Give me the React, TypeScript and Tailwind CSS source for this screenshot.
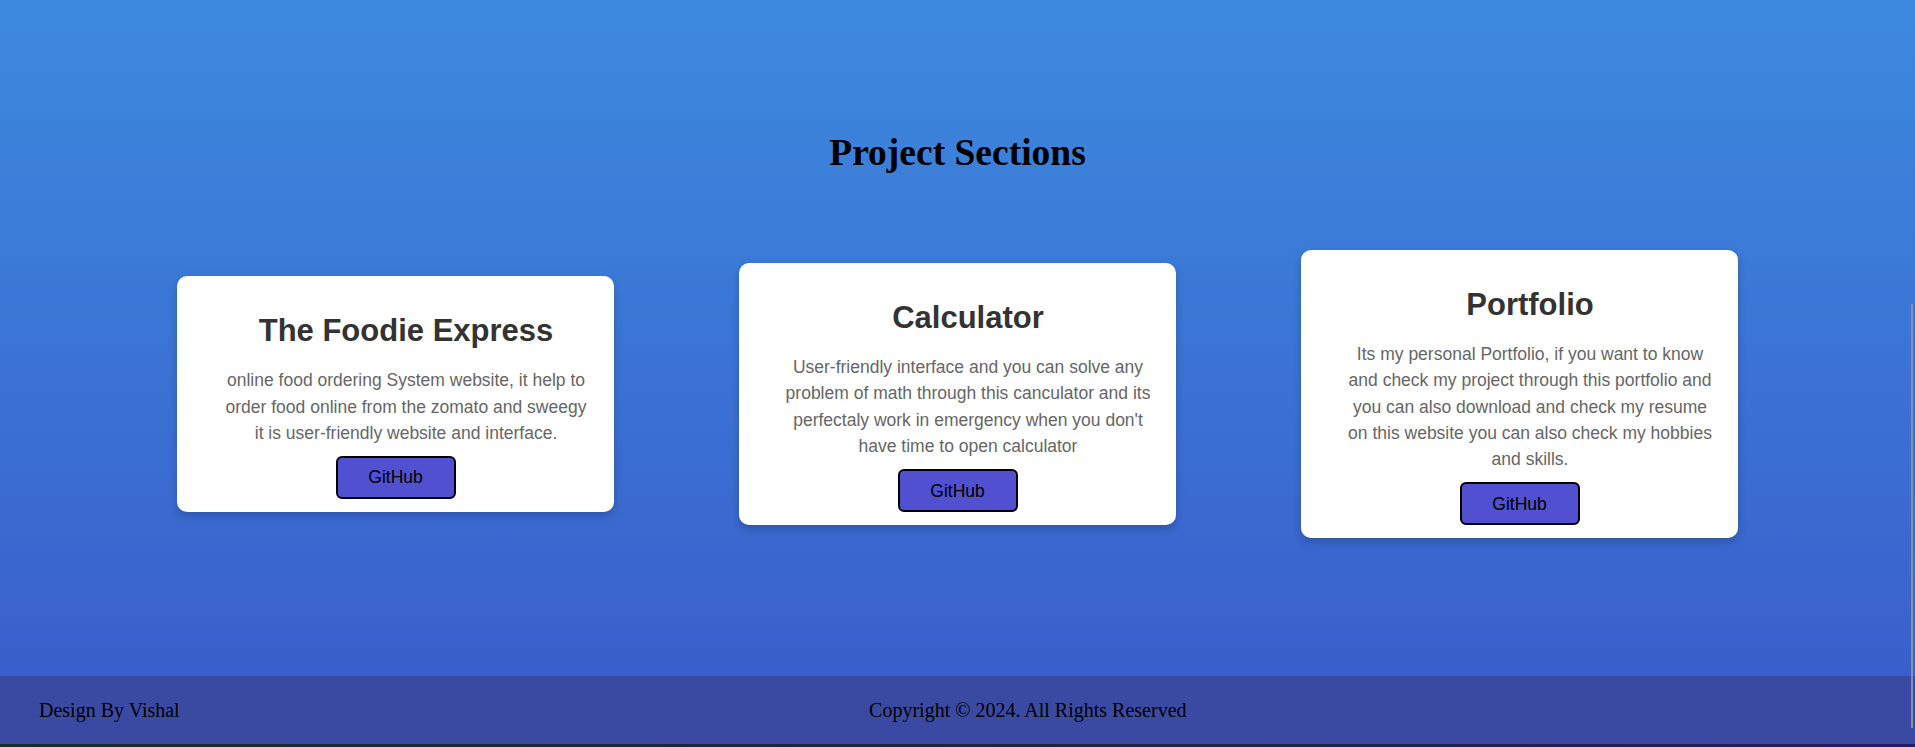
import React from 'react';

const projects = [
  {
    title: 'The Foodie Express',
    text: 'online food ordering System website, it help to order food online from the zomato and sweegy it is user-friendly website and interface.',
  },
  {
    title: 'Calculator',
    text: "User-friendly interface and you can solve any problem of math through this canculator and its perfectaly work in emergency when you don't have time to open calculator",
  },
  {
    title: 'Portfolio',
    text: 'Its my personal Portfolio, if you want to know and check my project through this portfolio and you can also download and check my resume on this website you can also check my hobbies and skills.',
  },
];

function ProjectCard({ title, text }: { title: string; text: string }) {
  return (
    <div className="w-[437px] rounded-[10px] bg-white px-[20px] pt-[37px] pb-[13px] shadow-[0_4px_10px_rgba(0,0,0,0.2)] flex flex-col items-center font-['Liberation_Sans',Arial,sans-serif]">
      <div className="w-full pl-[23px] pr-[2px] text-center">
        <h2 className="text-[31px] leading-[36px] font-bold text-[#333]">{title}</h2>
        <p className="mt-[18px] text-[17.5px] leading-[26.25px] text-[#666]">{text}</p>
      </div>
      <button className="mt-[10px] h-[43px] w-[120px] rounded-[6px] border-2 border-black bg-[#5050d0] text-[17.5px] text-black">
        GitHub
      </button>
    </div>
  );
}

export default function App() {
  return (
    <div className="relative min-h-screen flex flex-col">
      <main className="flex-1 bg-gradient-to-b from-[#3c8ade] to-[#3a5fcc] pt-[131px]">
        <h1 className="text-center text-[37.5px] leading-[43px] font-bold text-black font-['Liberation_Serif','Times_New_Roman',serif]">
          Project Sections
        </h1>
        <div className="mt-[76px] flex items-center justify-center gap-[125px]">
          {projects.map((p) => (
            <ProjectCard key={p.title} title={p.title} text={p.text} />
          ))}
        </div>
      </main>
      <footer className="h-[68px] bg-[#3a4aa3] px-[39px] flex items-center text-[20px] text-black font-['Liberation_Serif','Times_New_Roman',serif]">
        <span>Design By Vishal</span>
        <span className="flex-1 text-center">Copyright © 2024. All Rights Reserved</span>
      </footer>
      <div className="h-[3px] bg-gradient-to-r from-[#1c2a2c] via-[#23223f] to-[#2c1a5a]" />
      <div className="absolute right-[2px] top-[304px] h-[424px] w-[2px] bg-[#8a8fa8]" />
    </div>
  );
}
